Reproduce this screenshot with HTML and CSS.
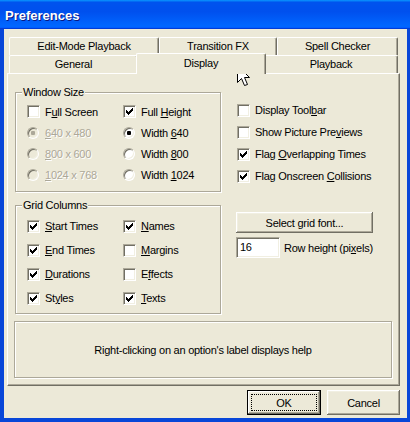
FILE: index.html
```html
<!DOCTYPE html>
<html>
<head>
<meta charset="utf-8">
<title>Preferences</title>
<link rel="stylesheet" href="styles.css">
</head>
<body>
<div class="window">
  <div class="titlebar"><span class="title">Preferences</span></div>
  <div class="frame">
    <div class="tabs">
      <div class="tabrow">
        <div class="tab w-edit">Edit-Mode Playback</div>
        <div class="tab w-trans">Transition FX</div>
        <div class="tab w-spell">Spell Checker</div>
      </div>
      <div class="tabrow">
        <div class="tab w-general">General</div>
        <div class="tab w-display selected">Display</div>
        <div class="tab w-playback">Playback</div>
      </div>
    </div>
    <div class="panel">
      <div class="top">
        <div class="leftcol">
          <div class="group g-window">
            <div class="legend">Window Size</div>
            <div class="opts rows21">
              <div class="opt"><span class="cb"></span><span>F<u>u</u>ll Screen</span></div>
              <div class="opt"><span class="cb"><svg width="7" height="7" viewBox="0 0 7 7"><path d="M0 2h1v1h1v1h1V3h1V2h1V1h1V0h1v3H6v1H5v1H4v1H3v1H2V6H1V5H0z"/></svg></span><span>Full <u>H</u>eight</span></div>
              <div class="opt disabled"><span class="rb on"></span><span><u>6</u>40 x 480</span></div>
              <div class="opt"><span class="rb on"></span><span>Width <u>6</u>40</span></div>
              <div class="opt disabled"><span class="rb"></span><span><u>8</u>00 x 600</span></div>
              <div class="opt"><span class="rb"></span><span>Width <u>8</u>00</span></div>
              <div class="opt disabled"><span class="rb"></span><span><u>1</u>024 x 768</span></div>
              <div class="opt"><span class="rb"></span><span>Width <u>1</u>024</span></div>
            </div>
          </div>
          <div class="group g-grid">
            <div class="legend">Grid Columns</div>
            <div class="opts rows24">
              <div class="opt"><span class="cb"><svg width="7" height="7" viewBox="0 0 7 7"><path d="M0 2h1v1h1v1h1V3h1V2h1V1h1V0h1v3H6v1H5v1H4v1H3v1H2V6H1V5H0z"/></svg></span><span><u>S</u>tart Times</span></div>
              <div class="opt"><span class="cb"><svg width="7" height="7" viewBox="0 0 7 7"><path d="M0 2h1v1h1v1h1V3h1V2h1V1h1V0h1v3H6v1H5v1H4v1H3v1H2V6H1V5H0z"/></svg></span><span><u>N</u>ames</span></div>
              <div class="opt"><span class="cb"><svg width="7" height="7" viewBox="0 0 7 7"><path d="M0 2h1v1h1v1h1V3h1V2h1V1h1V0h1v3H6v1H5v1H4v1H3v1H2V6H1V5H0z"/></svg></span><span><u>E</u>nd Times</span></div>
              <div class="opt"><span class="cb"></span><span><u>M</u>argins</span></div>
              <div class="opt"><span class="cb"><svg width="7" height="7" viewBox="0 0 7 7"><path d="M0 2h1v1h1v1h1V3h1V2h1V1h1V0h1v3H6v1H5v1H4v1H3v1H2V6H1V5H0z"/></svg></span><span><u>D</u>urations</span></div>
              <div class="opt"><span class="cb"></span><span>E<u>f</u>fects</span></div>
              <div class="opt"><span class="cb"><svg width="7" height="7" viewBox="0 0 7 7"><path d="M0 2h1v1h1v1h1V3h1V2h1V1h1V0h1v3H6v1H5v1H4v1H3v1H2V6H1V5H0z"/></svg></span><span>St<u>y</u>les</span></div>
              <div class="opt"><span class="cb"><svg width="7" height="7" viewBox="0 0 7 7"><path d="M0 2h1v1h1v1h1V3h1V2h1V1h1V0h1v3H6v1H5v1H4v1H3v1H2V6H1V5H0z"/></svg></span><span><u>T</u>exts</span></div>
            </div>
          </div>
        </div>
        <div class="rightcol">
          <div class="rchecks">
            <div class="opt"><span class="cb"></span><span>Display Tool<u>b</u>ar</span></div>
            <div class="opt"><span class="cb"></span><span>Show Picture Pre<u>v</u>iews</span></div>
            <div class="opt"><span class="cb"><svg width="7" height="7" viewBox="0 0 7 7"><path d="M0 2h1v1h1v1h1V3h1V2h1V1h1V0h1v3H6v1H5v1H4v1H3v1H2V6H1V5H0z"/></svg></span><span>Flag <u>O</u>verlapping Times</span></div>
            <div class="opt"><span class="cb"><svg width="7" height="7" viewBox="0 0 7 7"><path d="M0 2h1v1h1v1h1V3h1V2h1V1h1V0h1v3H6v1H5v1H4v1H3v1H2V6H1V5H0z"/></svg></span><span>Flag Onscreen <u>C</u>ollisions</span></div>
          </div>
          <div class="btn fontbtn"><span>Select <u>g</u>rid font...</span></div>
          <div class="rowheight"><span class="edit">16</span><span class="rlabel">Row height (pi<u>x</u>els)</span></div>
        </div>
      </div>
      <div class="help">Right-clicking on an option's label displays help</div>
    </div>
    <div class="buttons">
      <div class="btn default"><span class="focus">OK</span></div>
      <div class="btn cancel"><span>Cancel</span></div>
    </div>
  </div>
  <svg class="cursor" width="14" height="22" viewBox="0 0 14 22"><path d="M0.5 0.5V17.5L4.5 13.5L7.5 20.5L10.5 19.5L7.5 12.5H12.5Z" fill="#fff" stroke="#000" stroke-width="1" stroke-linejoin="miter"/></svg>
</div>
</body>
</html>
```

FILE: styles.css
```css
* { box-sizing: border-box; }
html, body { margin: 0; padding: 0; }
body {
  width: 410px;
  height: 422px;
  overflow: hidden;
  font-family: "Liberation Sans", Arial, sans-serif;
  font-size: 11px;
  letter-spacing: -0.25px;
  color: #000;
  background: #ECE9D8;
}
u { text-decoration: underline; text-underline-offset: 1px; }

.window {
  position: relative;
  width: 410px;
  height: 422px;
  display: flex;
  flex-direction: column;
}
.titlebar {
  height: 29px;
  flex: none;
  display: flex;
  align-items: center;
  padding-left: 5px;
  background: linear-gradient(180deg, #0997ff, #0053ee 8%, #0050ee 40%, #0066ff 88%, #0066ff 93%, #005bff 95%, #003dd7 96%, #003dd7);
}
.title {
  color: #fff;
  font-weight: bold;
  font-size: 13px;
  letter-spacing: 0;
  text-shadow: 1px 1px #0a1883;
  margin-top: 1px;
}
.frame {
  flex: 1;
  border-style: solid;
  border-color: #0846d8;
  border-width: 0 3px 4px 4px;
  background: #ECE9D8;
  padding: 8px 7px 0 3px;
  display: flex;
  flex-direction: column;
}

/* tabs */
.tabs { margin-left: 2px; }
.tabrow { display: flex; align-items: flex-start; height: 18px; }
.tab {
  height: 18px;
  border-top: 1px solid #fff;
  border-left: 1px solid #fff;
  border-right: 1px solid #716f64;
  box-shadow: inset -1px 0 #aca899;
  border-radius: 2px 2px 0 0;
  text-align: center;
  line-height: 17px;
  white-space: nowrap;
  background: #ECE9D8;
}
.w-edit { width: 150px; }
.w-trans { width: 118px; }
.w-spell { width: 121px; }
.w-general { width: 129px; }
.w-playback { width: 134px; }
.w-display {
  width: 130px;
  margin: -2px -2px 0 -2px;
  height: 21px;
  line-height: 18px;
  position: relative;
  z-index: 1;
}

/* panel */
.panel {
  width: 393px;
  height: 313px;
  border-top: 1px solid #fff;
  border-left: 1px solid #fff;
  border-right: 1px solid #716f64;
  border-bottom: 1px solid #716f64;
  box-shadow: inset -1px -1px #aca899;
  padding: 18px 0 0 7px;
  display: flex;
  flex-direction: column;
  flex: none;
}
.top { display: flex; align-items: flex-start; }
.leftcol { width: 206px; display: flex; flex-direction: column; }

.group {
  border: 1px solid #aca899;
  box-shadow: inset 1px 1px #fff, 1px 1px #fff;
  display: flex;
  flex-direction: column;
  align-items: flex-start;
}
.g-window { padding-bottom: 6px; }
.g-grid { margin-top: 13px; padding-bottom: 3px; }
.legend {
  margin: -7px 0 0 6px;
  padding: 0 1px;
  height: 13px;
  line-height: 13px;
  background: #ECE9D8;
}
.opts {
  display: grid;
  grid-template-columns: 96px auto;
  margin: 2px 0 0 11px;
}
.rows21 { grid-auto-rows: 21px; }
.rows24 { grid-auto-rows: 24px; }

.opt { display: flex; align-items: center; white-space: nowrap; }
.disabled { color: #aca899; text-shadow: 1px 1px #fff; }

.cb {
  width: 13px;
  height: 13px;
  flex: none;
  margin-right: 5px;
  background: #fff;
  border: 1px solid;
  border-color: #aca899 #fff #fff #aca899;
  box-shadow: inset 1px 1px #716f64, inset -1px -1px #f1efe2;
  display: flex;
  align-items: center;
  justify-content: center;
}
.cb svg { display: block; shape-rendering: crispEdges; }
.rb {
  width: 12px;
  height: 12px;
  flex: none;
  margin-right: 6px;
  border-radius: 50%;
  background: #fff;
  border: 1px solid;
  border-color: #aca899 #fff #fff #aca899;
  box-shadow: inset 1px 1px #716f64, inset -1px -1px #f1efe2;
  display: flex;
  align-items: center;
  justify-content: center;
}
.rb.on::after {
  content: "";
  width: 4px;
  height: 4px;
  border-radius: 1px;
  background: #000;
}
.disabled .rb { background: #ECE9D8; }
.disabled .rb.on::after { background: #aca899; }

.rightcol {
  margin-left: 15px;
  padding-top: 7px;
  display: flex;
  flex-direction: column;
  align-items: flex-start;
}
.rchecks {
  margin-left: 1px;
  display: grid;
  grid-auto-rows: 22px;
}

.btn {
  background: #ECE9D8;
  box-shadow: inset -1px -1px #716f64, inset 1px 1px #fff, inset -2px -2px #aca899, inset 2px 2px #f1efe2;
  display: flex;
  align-items: center;
  justify-content: center;
  white-space: nowrap;
}
.fontbtn {
  width: 137px;
  height: 21px;
  margin-top: 25px;
}
.rowheight {
  display: flex;
  align-items: center;
  margin-top: 4px;
  height: 21px;
}
.edit {
  width: 44px;
  height: 21px;
  background: #fff;
  border: 1px solid;
  border-color: #aca899 #fff #fff #aca899;
  box-shadow: inset 1px 1px #716f64, inset -1px -1px #f1efe2;
  padding-left: 3px;
  line-height: 19px;
}
.rlabel { margin-left: 4px; }

.help {
  margin: 7px 0 0 -1px;
  width: 378px;
  height: 57px;
  border: 1px solid #aca899;
  box-shadow: inset 1px 1px #fff, 1px 1px #fff;
  display: flex;
  align-items: center;
  justify-content: center;
}

.buttons {
  display: flex;
  justify-content: flex-end;
  gap: 6px;
  margin-top: 4px;
}
.buttons .btn { height: 25px; }
.default {
  width: 74px;
  border: 1px solid #000;
  padding: 3px;
  align-items: stretch;
}
.focus {
  flex: 1;
  border: 1px dotted #000;
  display: flex;
  align-items: center;
  justify-content: center;
}
.cancel { width: 73px; }

.cursor {
  position: absolute;
  left: 237px;
  top: 65px;
}
```
